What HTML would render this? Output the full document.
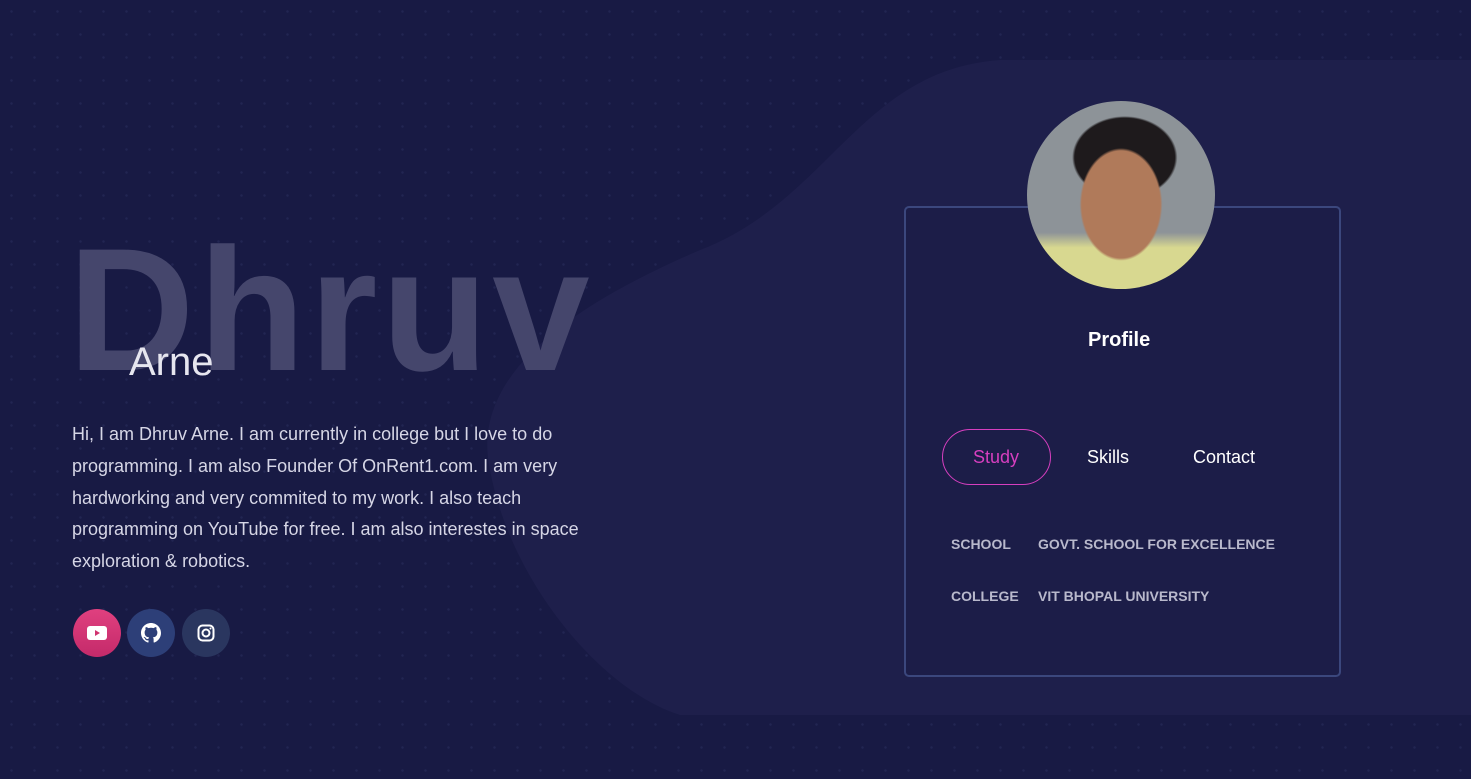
<!DOCTYPE html>
<html><head><style>
body{margin:0;width:1471px;height:779px;overflow:hidden;background:#181a44;font-family:"Liberation Sans",sans-serif;position:relative}
.dots{position:absolute;inset:0;background-image:radial-gradient(#222552 1px,transparent 1.5px);background-size:23px 23px}
.big{position:absolute;left:68px;top:223px;font-size:175px;font-weight:bold;color:#45466c;letter-spacing:4px;line-height:1}
.arne{position:absolute;left:129px;top:340px;font-size:40px;color:#e6e6ef}
.p{position:absolute;left:72px;top:419px;width:548px;font-size:18px;line-height:31.8px;color:#d6d6e6}
.s{position:absolute;top:609px;width:48px;height:48px;border-radius:50%;display:flex;align-items:center;justify-content:center}
.card{position:absolute;left:904px;top:206px;width:433px;height:467px;border:2px solid #3b477d;border-radius:5px;background:#1c1d48}
.av{position:absolute;left:1027px;top:101px;width:188px;height:188px;border-radius:50%;background:radial-gradient(ellipse 22% 30% at 50% 55%,#b07a5a 0 95%,transparent 100%),radial-gradient(ellipse 28% 22% at 52% 30%,#1e1a1c 0 95%,transparent 100%),linear-gradient(#8d9398 70%,#d8d890 78%);overflow:hidden}
.t{position:absolute;color:#fff;font-size:18px}
.lab{position:absolute;font-weight:bold;font-size:14px;color:#b9b9cc}
</style></head><body>
<div class="dots"></div>
<svg style="position:absolute;left:0;top:0" width="1471" height="779"><path d="M1471 60 L1000 60 C860 70 830 200 700 250 C560 310 470 380 490 470 C510 580 600 690 680 715 L1471 715 Z" fill="#1e1f4b"/></svg>
<div class="big">Dhruv</div>
<div class="arne">Arne</div>
<div class="p">Hi, I am Dhruv Arne. I am currently in college but I love to do programming. I am also Founder Of OnRent1.com. I am very hardworking and very commited to my work. I also teach programming on YouTube for free. I am also interestes in space exploration &amp; robotics.</div>
<div class="s" style="left:73px;background:linear-gradient(#e0407f,#c42a6a)"><svg width="20" height="14"><rect width="20" height="14" rx="3" fill="#fff"/><path d="M8 4 L13 7 L8 10Z" fill="#d0336f"/></svg></div>
<div class="s" style="left:127px;background:#2d3f78"><svg width="20" height="20" viewBox="0 0 16 16"><path fill="#fff" d="M8 0C3.6 0 0 3.6 0 8c0 3.5 2.3 6.5 5.5 7.6.4.1.5-.2.5-.4v-1.4c-2.200.5-2.700-1-2.700-1-.4-.9-.9-1.200-.9-1.200-.7-.5.1-.5.1-.5.8.1 1.200.8 1.200.8.7 1.300 1.900.9 2.300.7.1-.5.3-.9.5-1.100-1.800-.2-3.600-.9-3.600-4 0-.9.3-1.600.8-2.100-.1-.2-.4-1 .1-2.100 0 0 .7-.2 2.200.8.6-.2 1.300-.3 2-.3s1.400.1 2 .3c1.500-1 2.200-.8 2.200-.8.4 1.100.2 1.900.1 2.100.5.6.8 1.300.8 2.100 0 3.100-1.900 3.800-3.600 4 .3.3.6.8.6 1.500v2.200c0 .2.1.5.6.4C13.700 14.500 16 11.500 16 8c0-4.400-3.600-8-8-8z"/></svg></div>
<div class="s" style="left:182px;background:#2a365f"><svg width="18" height="18" viewBox="0 0 18 18"><rect x="1.5" y="1.5" width="15" height="15" rx="4" fill="none" stroke="#fff" stroke-width="2"/><circle cx="9" cy="9" r="3.5" fill="none" stroke="#fff" stroke-width="2"/><circle cx="13.5" cy="4.5" r="1" fill="#fff"/></svg></div>
<div class="card"></div>
<div class="av"></div>
<div class="t" style="left:1088px;top:329px;font-weight:bold;font-size:20px">Profile</div>
<div style="position:absolute;left:942px;top:429px;width:107px;height:54px;border:1px solid #d63fbf;border-radius:28px"></div>
<div class="t" style="left:973px;top:447px;color:#d63fbf">Study</div>
<div class="t" style="left:1087px;top:447px">Skills</div>
<div class="t" style="left:1193px;top:447px">Contact</div>
<div class="lab" style="left:951px;top:536px">SCHOOL</div>
<div class="lab" style="left:1038px;top:536px">GOVT. SCHOOL FOR EXCELLENCE</div>
<div class="lab" style="left:951px;top:588px">COLLEGE</div>
<div class="lab" style="left:1038px;top:588px">VIT BHOPAL UNIVERSITY</div>
</body></html>
